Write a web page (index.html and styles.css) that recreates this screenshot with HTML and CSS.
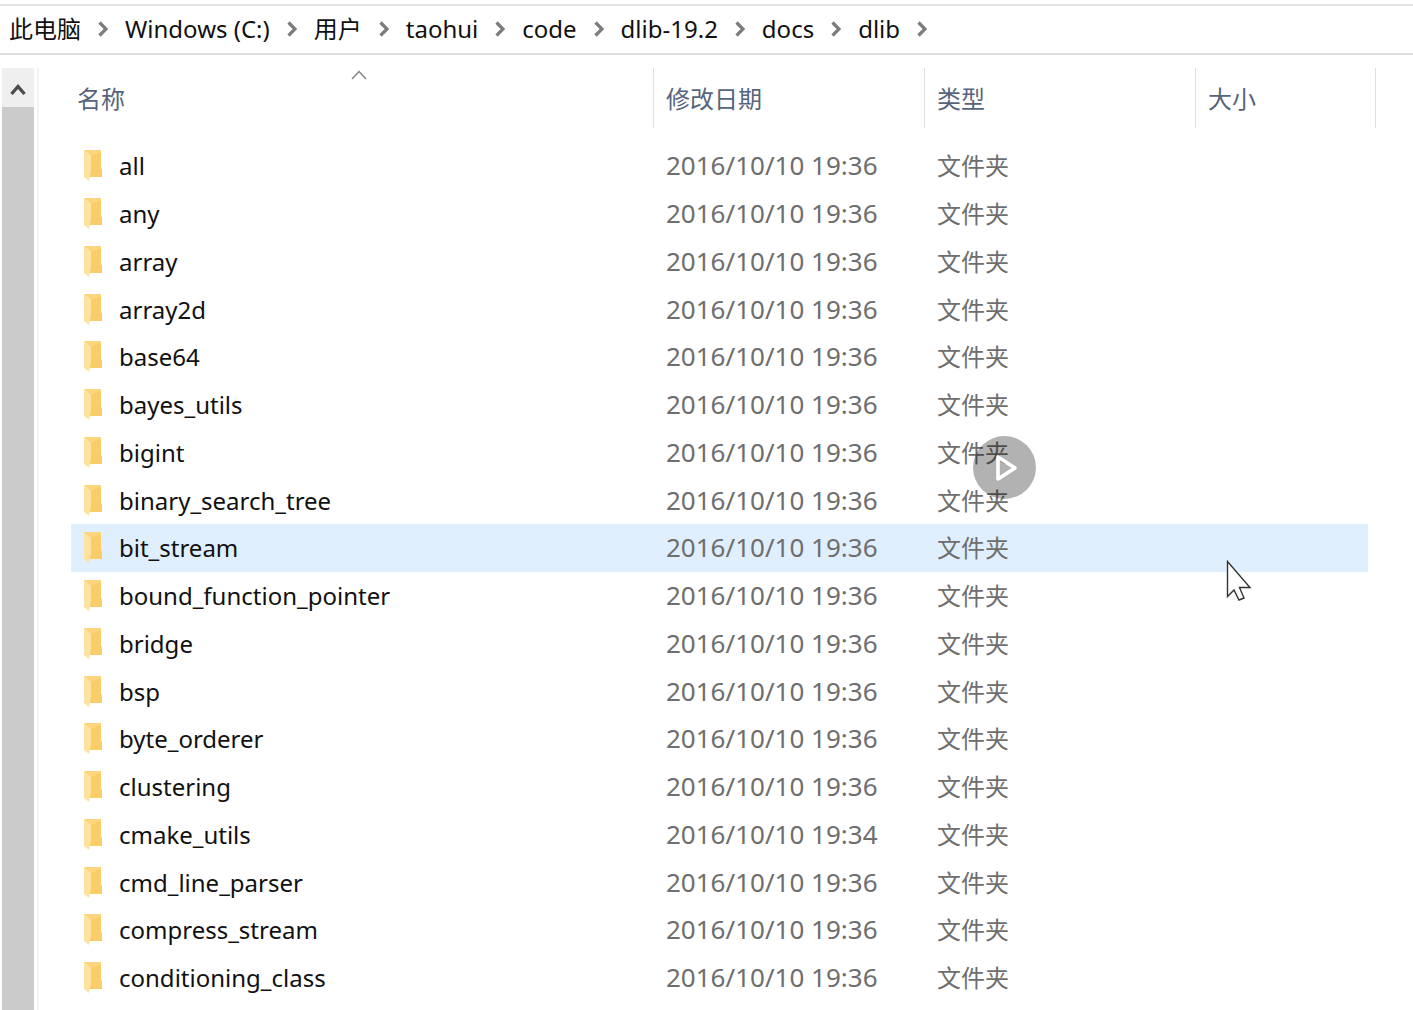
FILE: index.html
```html
<!DOCTYPE html>
<html lang="zh-CN">
<head>
<meta charset="utf-8">
<meta name="viewport" content="width=device-width, initial-scale=1">
<title>dlib</title>
<link rel="stylesheet" href="styles.css">
</head>
<body>
<svg class="sprites" aria-hidden="true">
  <symbol id="chevron" viewBox="0 0 10 16"><path d="M1.500 1.500 8 8l-6.500 6.500" fill="none" stroke="#7c7c7c" stroke-width="3.200"/></symbol>
  <symbol id="folder" viewBox="0 0 20 32">
    <path d="M1 0h17v18l1 2v7H1z" fill="#fbd67c"/>
    <path d="M8 6 18 2v16l1 2v7H6z" fill="#fbcd68"/>
    <path d="M1 0 8 6v15l-2 10-5-4z" fill="#fde2a0"/>
  </symbol>
</svg>

<nav class="address" aria-label="路径">
  <ol class="crumbs">
    <li><a href="#">此电脑</a><svg><use href="#chevron"/></svg></li>
    <li><a href="#">Windows (C:)</a><svg><use href="#chevron"/></svg></li>
    <li><a href="#">用户</a><svg><use href="#chevron"/></svg></li>
    <li><a href="#">taohui</a><svg><use href="#chevron"/></svg></li>
    <li><a href="#">code</a><svg><use href="#chevron"/></svg></li>
    <li><a href="#">dlib-19.2</a><svg><use href="#chevron"/></svg></li>
    <li><a href="#">docs</a><svg><use href="#chevron"/></svg></li>
    <li><a href="#">dlib</a><svg><use href="#chevron"/></svg></li>
  </ol>
</nav>

<main class="window">
  <div class="scrollbar">
    <button class="scroll-up" type="button" aria-label="向上滚动">
      <svg width="16" height="16" viewBox="0 0 16 16"><path d="M1.500 12 8 4.500 14.500 12" fill="none" stroke="#4c4c4c" stroke-width="3.400"/></svg>
    </button>
    <div class="thumb"></div>
  </div>
  <div class="pane">
    <table class="files">
      <colgroup><col><col class="col-date"><col class="col-type"><col class="col-size"><col class="col-edge"></colgroup>
      <thead>
        <tr>
          <th scope="col">名称<svg class="sort" viewBox="0 0 16 10"><path d="M1 9 8 1.500 15 9" fill="none" stroke="#858585" stroke-width="1.500"/></svg></th>
          <th scope="col">修改日期</th>
          <th scope="col">类型</th>
          <th scope="col" colspan="2">大小</th>
        </tr>
      </thead>
      <tbody id="rows"></tbody>
    </table>
  </div>
</main>

<button class="play" type="button" aria-label="播放">
  <svg width="24" height="28" viewBox="0 0 24 28"><path d="M3 3v22L20 14z" fill="none" stroke="#fff" stroke-width="3.600" stroke-linejoin="round"/></svg>
</button>
<svg class="pointer" viewBox="0 0 26 42"><path d="M1.500 1.500v35L8 30l5 10 5-2-4.500-10.500H24z" fill="#fff" stroke="#333" stroke-width="1.400"/></svg>

<script src="files.js"></script>
</body>
</html>
```
FILE: styles.css
```css
* {
  box-sizing: border-box;
}

body {
  margin: 0;
  height: 100vh;
  padding-top: 4px;
  display: flex;
  flex-direction: column;
  overflow: hidden;
  background: #fff;
  color: #111;
  font-family: "Noto Sans", "Noto Sans CJK SC", sans-serif;
  font-size: 24px;
}

button {
  display: flex;
  align-items: center;
  justify-content: center;
  padding: 0;
  border: 0;
}

.sprites {
  display: none;
}

.address {
  flex: none;
  height: 51px;
  display: flex;
  align-items: center;
  padding-left: 9px;
  border-top: 2px solid #e4e2e4;
  border-bottom: 2px solid #dedede;
}

.crumbs {
  display: flex;
  gap: 17px;
  margin: 0;
  padding: 0 0 2px;
  list-style: none;
}

.crumbs li {
  display: flex;
  align-items: center;
  gap: 17px;
  white-space: nowrap;
}

.crumbs svg {
  width: 10px;
  height: 16px;
}

.crumbs a {
  color: inherit;
  line-height: 32px;
  text-decoration: none;
}

.window {
  flex: 1;
  min-height: 0;
  display: flex;
  padding: 13px 37px 0 2px;
}

.scrollbar {
  width: 32px;
  flex: none;
  display: flex;
  flex-direction: column;
}

.scroll-up {
  height: 39px;
  padding-top: 4px;
  background: #f0eff0;
}

.thumb {
  flex: 1;
  background: #cbcbcb;
}

.pane {
  flex: 1;
  min-width: 0;
  margin-left: 3px;
  padding-left: 32px;
  border-left: 2px solid #f3f2f5;
}

.files {
  width: 100%;
  table-layout: fixed;
  border-collapse: separate;
  border-spacing: 0;
}

.col-date,
.col-type {
  width: 271px;
}

.col-size {
  width: 172px;
}

.col-edge {
  width: 8px;
}

th {
  position: relative;
  height: 60px;
  padding: 2px 0 0 12px;
  border-right: 1px solid #dfe0e4;
  color: #56657c;
  font-weight: 400;
  line-height: 32px;
  text-align: left;
}

th:first-child,
td:first-child {
  padding-left: 6px;
}

.sort {
  position: absolute;
  top: 2px;
  left: calc(50% - 11px);
  width: 16px;
  height: 10px;
}

tbody::before {
  content: "";
  display: block;
  height: 14px;
}

td {
  height: 48px;
  padding: 0 0 0 12px;
  color: #6e6e6e;
  line-height: 32px;
  white-space: nowrap;
}

tr:nth-child(4n) td {
  height: 47px;
}

.date {
  padding-bottom: 2px;
  font-size: 26px;
}

.name {
  display: flex;
  align-items: center;
  gap: 16px;
  padding-left: 6px;
  color: #111;
}

.name svg {
  width: 20px;
  height: 32px;
}

.hovered td:not(:last-child) {
  background: #e0effe;
}

.play {
  position: absolute;
  top: 436px;
  left: 973px;
  width: 63px;
  height: 63px;
  padding-left: 4px;
  border-radius: 50%;
  background: rgba(0, 0, 0, 0.3);
}

.pointer {
  position: absolute;
  top: 560px;
  left: 1226px;
  width: 26px;
  height: 42px;
}
```
FILE: files.js
```js
const names = [
  "all", "any", "array", "array2d", "base64", "bayes_utils", "bigint",
  "binary_search_tree", "bit_stream", "bound_function_pointer", "bridge",
  "bsp", "byte_orderer", "clustering", "cmake_utils", "cmd_line_parser",
  "compress_stream", "conditioning_class", ""
];
const times = { cmake_utils: "2016/10/10 19:34" };

document.getElementById("rows").innerHTML = names.map(name => `
  <tr${name === "bit_stream" ? ' class="hovered"' : ""}>
    <td><span class="name"><svg aria-hidden="true"><use href="#folder"/></svg>${name}</span></td>
    <td class="date">${name && (times[name] || "2016/10/10 19:36")}</td>
    <td>${name && "文件夹"}</td>
    <td></td><td></td>
  </tr>`).join("");
```
